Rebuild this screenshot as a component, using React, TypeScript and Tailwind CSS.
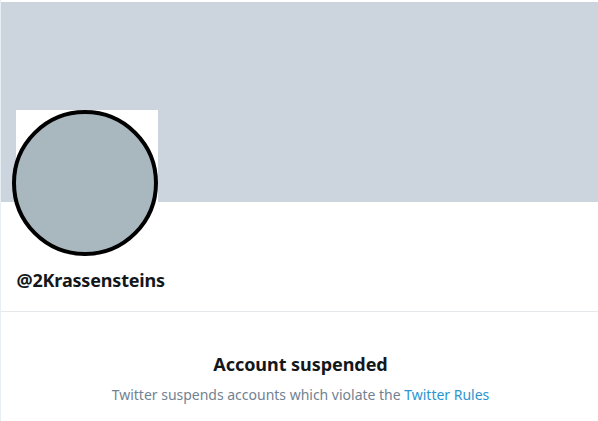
export default function App() {
  return (
    <div className="flex h-[421px] w-[598px] flex-col overflow-hidden border-l border-[#e6f0f4] bg-white pt-[2px] font-['Noto_Sans','Open_Sans',sans-serif] text-[#14171a]">
      {/* Banner */}
      <div className="h-[200px] shrink-0 bg-[#ccd5dd]"></div>

      {/* Profile */}
      <section className="flex h-[110px] shrink-0 flex-col border-b border-[#e6e9ec]">
        <div className="relative -mt-[92px] ml-[11px] h-[146px] w-[146px] shrink-0">
          <div className="absolute left-1 top-0 h-[92px] w-[142px] bg-white"></div>
          <div className="relative h-full w-full rounded-full border-4 border-black bg-[#a9b7bf]"></div>
        </div>
        <h1 className="ml-[15.5px] mt-3 text-[18px] font-bold leading-6 tracking-[-0.18px]">
          @2Krassensteins
        </h1>
      </section>

      {/* Suspension notice */}
      <section className="pl-0.5 pt-10 text-center">
        <h2 className="text-[18px] font-bold leading-6 tracking-[-0.05px]">Account suspended</h2>
        <p className="mt-[9px] text-[14px] leading-5 tracking-[-0.01px] text-[#728292]">
          Twitter suspends accounts which violate the{" "}
          <a href="#" className="text-[#2b95d2]">Twitter Rules</a>
        </p>
      </section>
    </div>
  );
}
